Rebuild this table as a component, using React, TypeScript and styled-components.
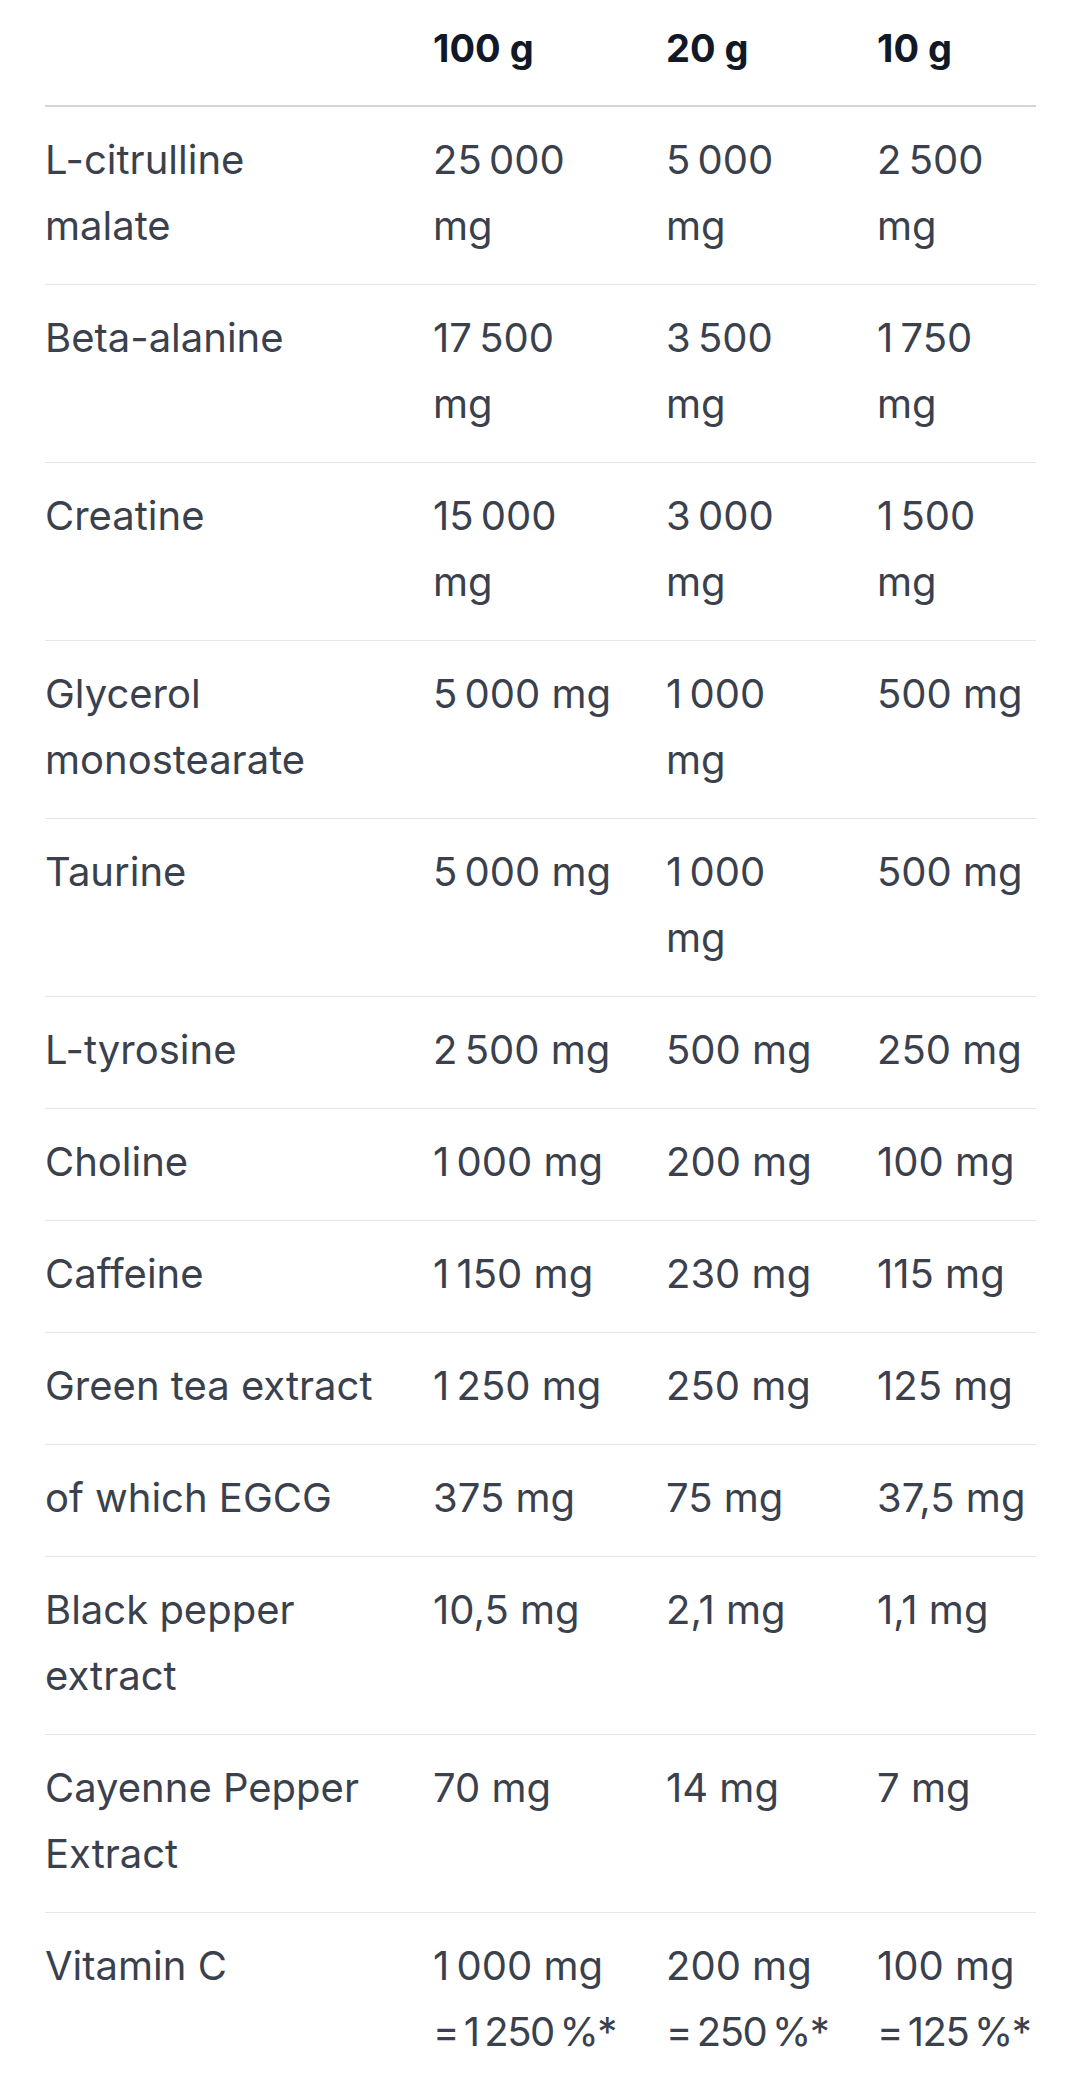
import React from "react";
import styled, { createGlobalStyle } from "styled-components";

const GlobalStyle = createGlobalStyle`
  html, body {
    margin: 0;
    padding: 0;
    background: #ffffff;
  }
  body {
    font-family: Inter, "Open Sans", sans-serif;
    -webkit-font-smoothing: antialiased;
  }
`;

const Wrapper = styled.div`
  padding: 0 44px 0 45px;
`;

const Table = styled.div`
  display: flex;
  flex-direction: column;
  width: 991px;
`;

const columns = "388px 233px 211px 159px";

const HeadRow = styled.div`
  display: grid;
  grid-template-columns: ${columns};
  padding: 15px 0 24px;
  border-bottom: 2px solid #d4d5d8;
`;

const BodyRow = styled.div`
  display: grid;
  grid-template-columns: ${columns};
  padding: 20px 0 25px;
  border-bottom: 1px solid #e5e6e9;
`;

const padRight = ["56px", "43px", "46px", "0px"];

const HeadCell = styled.div<{ $col: number }>`
  padding-right: ${(p) => padRight[p.$col]};
  font-size: 38px;
  line-height: 66px;
  font-weight: 700;
  color: #111827;
`;

const Cell = styled.div<{ $col: number }>`
  padding-right: ${(p) => padRight[p.$col]};
  font-size: 40px;
  line-height: 66px;
  font-weight: 400;
  color: #3a414d;
`;

const Line = styled.span<{ $tight?: boolean }>`
  white-space: nowrap;
  letter-spacing: ${(p) => (p.$tight ? "-1.5px" : "0")};
`;

const N = "\u202F";

type Item = { name: string; values: string[][] };

const rows: Item[] = [
  { name: "L-citrulline malate", values: [[`25${N}000 mg`], [`5${N}000 mg`], [`2${N}500 mg`]] },
  { name: "Beta-alanine", values: [[`17${N}500 mg`], [`3${N}500 mg`], [`1${N}750 mg`]] },
  { name: "Creatine", values: [[`15${N}000 mg`], [`3${N}000 mg`], [`1${N}500 mg`]] },
  { name: "Glycerol monostearate", values: [[`5${N}000 mg`], [`1${N}000 mg`], ["500 mg"]] },
  { name: "Taurine", values: [[`5${N}000 mg`], [`1${N}000 mg`], ["500 mg"]] },
  { name: "L-tyrosine", values: [[`2${N}500 mg`], ["500 mg"], ["250 mg"]] },
  { name: "Choline", values: [[`1${N}000 mg`], ["200 mg"], ["100 mg"]] },
  { name: "Caffeine", values: [[`1${N}150 mg`], ["230 mg"], ["115 mg"]] },
  { name: "Green tea extract", values: [[`1${N}250 mg`], ["250 mg"], ["125 mg"]] },
  { name: "of which EGCG", values: [["375 mg"], ["75 mg"], ["37,5 mg"]] },
  { name: "Black pepper extract", values: [["10,5 mg"], ["2,1 mg"], ["1,1 mg"]] },
  { name: "Cayenne Pepper Extract", values: [["70 mg"], ["14 mg"], ["7 mg"]] },
  {
    name: "Vitamin C",
    values: [
      [`1${N}000 mg`, `=${N}1${N}250${N}%*`],
      ["200 mg", `=${N}250${N}%*`],
      ["100 mg", `=${N}125${N}%*`],
    ],
  },
];

const headers = ["", "100 g", "20 g", "10 g"];

export default function App() {
  return (
    <Wrapper>
      <GlobalStyle />
      <Table>
        <HeadRow>
          {headers.map((h, i) => (
            <HeadCell key={i} $col={i}>
              {h}
            </HeadCell>
          ))}
        </HeadRow>
        {rows.map((r) => (
          <BodyRow key={r.name}>
            <Cell $col={0}>{r.name}</Cell>
            {r.values.map((lines, i) => (
              <Cell key={i} $col={i + 1}>
                {lines.length === 1
                  ? lines[0]
                  : lines.map((l, j) => (
                      <React.Fragment key={j}>
                        {j > 0 && <br />}
                        <Line $tight={j > 0}>{l}</Line>
                      </React.Fragment>
                    ))}
              </Cell>
            ))}
          </BodyRow>
        ))}
      </Table>
    </Wrapper>
  );
}
